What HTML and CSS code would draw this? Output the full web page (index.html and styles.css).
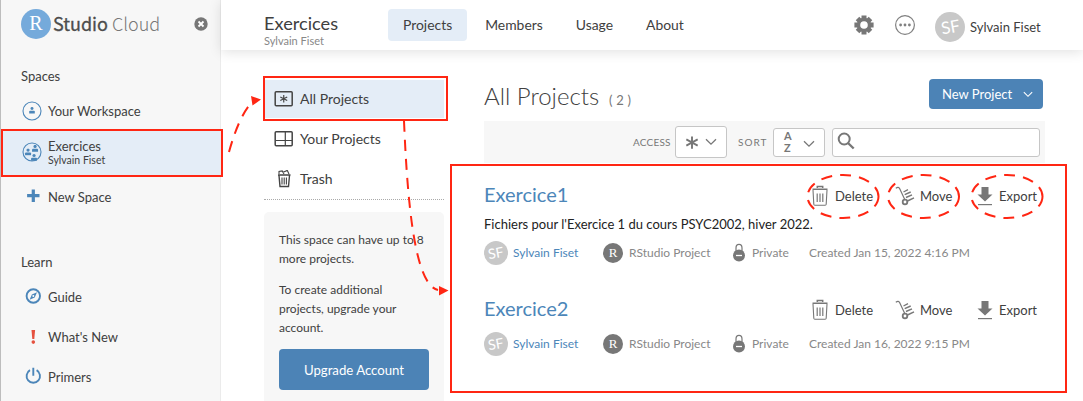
FILE: index.html
```html
<!DOCTYPE html>
<html lang="en">
<head>
<meta charset="utf-8">
<title>RStudio Cloud</title>
<link rel="stylesheet" href="styles.css">
</head>
<body>
<svg class="defs" aria-hidden="true">
  <symbol id="trash" viewBox="0 0 18 22">
    <path d="M1.500 4.200h15M6.300 3V1.600h5.400V3" fill="none" stroke="currentColor" stroke-width="1.500"/>
    <path d="M2 5l.8 14.300q.1 1 1.100 1h10.200q1 0 1.100-1L16 5" fill="none" stroke="currentColor" stroke-width="1.100"/>
    <path d="M6.200 8.500v8.500M9 8.500v8.500M11.800 8.500v8.500" stroke="currentColor" stroke-width="1.200"/>
  </symbol>
  <symbol id="truck" viewBox="0 0 20 20">
    <path d="M.8 2.200q2.800-1.800 3.800.4L10 14" fill="none" stroke="currentColor" stroke-width="1.200"/>
    <path d="M8.500 6l4.500-2.300M9.700 8.700l6-2.700M11 11.500l6-2.700M12.500 15l6.500-3.200" stroke="currentColor" stroke-width="1.400"/>
    <circle cx="10" cy="16" r="2.300" fill="none" stroke="currentColor" stroke-width="1.800"/>
  </symbol>
  <symbol id="export" viewBox="0 0 16 20">
    <path d="M4.500 1h7v7.500h4L8 15.500l-7.500-7h4z" fill="currentColor"/>
    <path d="M1 18.600h14" stroke="currentColor" stroke-width="1.200"/>
  </symbol>
  <symbol id="lock" viewBox="0 0 14 20">
    <path d="M4 10V5a3 3.600 0 0 1 6 0v5" fill="none" stroke="currentColor" stroke-width="1.200"/>
    <circle cx="7" cy="12.500" r="6" fill="currentColor"/>
    <path d="M4 12.500h6" stroke="#fff" stroke-width="1.300"/>
  </symbol>
  <symbol id="person" viewBox="0 0 8 8">
    <circle cx="4" cy="2" r="1.700"/><path d="M.8 7.600V5.500q0-1 1-1h4.400q1 0 1 1v2.100z"/>
  </symbol>
  <symbol id="star" viewBox="0 0 16 16">
    <path d="M8 1v14M1.500 4.500l13 7M14.500 4.500l-13 7" stroke="currentColor" stroke-width="2.200"/>
  </symbol>
  <symbol id="chev" viewBox="0 0 12 8">
    <path d="M1 1.200l5 5 5-5" fill="none" stroke="currentColor" stroke-width="1.300"/>
  </symbol>
</svg>

<div class="app">
  <aside class="sidebar">
    <div class="brand">
      <span class="brand-mark">R</span>
      <span class="brand-name">Studio</span>
      <span class="brand-sub">Cloud</span>
      <svg class="close" viewBox="0 0 14 14"><circle cx="7" cy="7" r="6.700" fill="#777"/><path d="M4.500 4.500l5 5M9.500 4.500l-5 5" stroke="#fff" stroke-width="1.800"/></svg>
    </div>
    <h2 class="group">Spaces</h2>
    <a class="nav workspace"><svg class="nav-icon ring" viewBox="0 0 20 20"><circle cx="10" cy="10" r="9" fill="none" stroke="#4c86b9" stroke-width="1.100"/><use href="#person" x="6.500" y="5.500" width="7" height="7.500" fill="#4c86b9"/></svg><span>Your Workspace</span></a>
    <a class="nav current"><svg class="nav-icon ring" viewBox="0 0 20 20"><circle cx="10" cy="10" r="9" fill="none" stroke="#4c86b9" stroke-width="1.100"/><g fill="#4c86b9"><use href="#person" x="9.300" y="2.500" width="7.500" height="7.500"/><use href="#person" x="2.300" y="6.200" width="7.500" height="7.500"/><use href="#person" x="8.300" y="11.600" width="7.500" height="7.500"/></g></svg><span class="stack"><span>Exercices</span><small>Sylvain Fiset</small></span></a>
    <a class="nav new"><svg class="nav-icon" viewBox="0 0 20 20"><path d="M10.300 2.500v12.400M4.100 8.700h12.400" stroke="#4c86b9" stroke-width="3.200"/></svg><span>New Space</span></a>
    <h2 class="group learn">Learn</h2>
    <a class="nav"><svg class="nav-icon" viewBox="0 0 20 20"><circle cx="10.300" cy="9" r="6.700" fill="none" stroke="#4c86b9" stroke-width="1.900"/><path d="M14 5.300l-2.300 5.200-5.100 2.200 2.300-5.200z" fill="#4c86b9"/><circle cx="10.300" cy="9" r="1" fill="#fff"/></svg><span>Guide</span></a>
    <a class="nav"><svg class="nav-icon" viewBox="0 0 20 20"><path d="M8.500 3h3.600l-.8 9H9.300z" fill="#e5513f"/><circle cx="10.300" cy="15.100" r="1.800" fill="#e5513f"/></svg><span>What's New</span></a>
    <a class="nav"><svg class="nav-icon" viewBox="0 0 20 20"><path d="M7 3.200a6.700 6.700 0 1 0 6.600 0M10.300 .8v8" fill="none" stroke="#4c86b9" stroke-width="1.900"/></svg><span>Primers</span></a>
  </aside>

  <div class="page">
    <header class="topbar">
      <div class="space-name"><h1>Exercices</h1><span>Sylvain Fiset</span></div>
      <nav class="tabs"><a class="active">Projects</a><a>Members</a><a>Usage</a><a>About</a></nav>
      <div class="user">
        <svg class="gear" viewBox="0 0 20 20"><g stroke="#777" stroke-width="5"><path d="M10 .4v19.200M.4 10h19.200M3.500 3.500l13 13M16.500 3.500l-13 13"/></g><circle cx="10" cy="10" r="7.200" fill="#777"/><circle cx="10" cy="10" r="3.800" fill="#fff"/></svg>
        <svg class="more" viewBox="0 0 20 20"><circle cx="10" cy="10" r="9.400" fill="none" stroke="#808080" stroke-width="1.200"/><g fill="#808080"><circle cx="5.600" cy="10" r="1.400"/><circle cx="10" cy="10" r="1.400"/><circle cx="14.400" cy="10" r="1.400"/></g></svg>
        <span class="avatar big"><i>SF</i></span>
        <span class="user-name">Sylvain Fiset</span>
      </div>
    </header>

    <div class="body">
      <section class="filters">
        <a class="filter on"><svg viewBox="0 0 20 18"><rect x="1.200" y="1.700" width="17" height="14" rx="1" fill="none" stroke="#444" stroke-width="1.500"/><use href="#star" x="5.500" y="4.500" width="8.500" height="8.500" color="#444"/></svg><span>All Projects</span></a>
        <a class="filter"><svg viewBox="0 0 20 18"><rect x="1.200" y="1.700" width="17" height="14" rx="1" fill="none" stroke="#444" stroke-width="1.500"/><path d="M11.300 2v13.500M2 10.500h16" stroke="#444" stroke-width="1.200"/></svg><span>Your Projects</span></a>
        <a class="filter"><svg viewBox="0 0 20 18"><path d="M4 5h12.500M5 5.500l1 11h8.500l1-11" fill="none" stroke="#444" stroke-width="1.400"/><path d="M8 7.500v7M10.200 7.500v7M12.400 7.500v7M5 4V1.500l3.200-.6 1.800 3M8.500 2.400l4.800-2 1.700 3.600" fill="none" stroke="#444" stroke-width="1.100"/></svg><span>Trash</span></a>
        <div class="upgrade">
          <p>This space can have up to 8 more projects.</p>
          <p>To create additional projects, upgrade your account.</p>
          <button class="primary">Upgrade Account</button>
        </div>
      </section>

      <main class="content">
        <div class="heading">
          <h2>All Projects</h2><span class="count">( 2 )</span>
          <button class="primary create"><span>New Project</span><svg viewBox="0 0 12 8"><use href="#chev"/></svg></button>
        </div>
        <div class="toolbar">
          <span class="label access">ACCESS</span>
          <span class="select tall"><svg class="glyph" viewBox="0 0 16 16"><use href="#star"/></svg><svg class="arrow" viewBox="0 0 12 8"><use href="#chev"/></svg></span>
          <span class="label sort">SORT</span>
          <span class="select"><span class="az"><b>A</b><b>Z</b></span><svg class="arrow low" viewBox="0 0 12 8"><use href="#chev"/></svg></span>
          <span class="search"><svg viewBox="0 0 18 18"><circle cx="7.200" cy="7" r="5.500" fill="none" stroke="#777" stroke-width="2"/><path d="M11 11l5.700 5.500" stroke="#777" stroke-width="2.400"/></svg></span>
        </div>

        <article class="project">
          <div class="project-head"><h3>Exercice1</h3>
            <div class="actions"><a><svg class="i-trash"><use href="#trash"/></svg>Delete</a><a><svg class="i-truck"><use href="#truck"/></svg>Move</a><a><svg class="i-export"><use href="#export"/></svg>Export</a></div>
          </div>
          <p class="description">Fichiers pour l'Exercice 1 du cours PSYC2002, hiver 2022.</p>
          <div class="meta"><span class="avatar"><i>SF</i></span><a class="owner">Sylvain Fiset</a><span class="kind-mark">R</span><span class="kind">RStudio Project</span><svg class="i-lock"><use href="#lock"/></svg><span class="privacy">Private</span><span class="created">Created Jan 15, 2022 4:16 PM</span></div>
        </article>
        <article class="project second">
          <div class="project-head"><h3>Exercice2</h3>
            <div class="actions"><a><svg class="i-trash"><use href="#trash"/></svg>Delete</a><a><svg class="i-truck"><use href="#truck"/></svg>Move</a><a><svg class="i-export"><use href="#export"/></svg>Export</a></div>
          </div>
          <div class="meta"><span class="avatar"><i>SF</i></span><a class="owner">Sylvain Fiset</a><span class="kind-mark">R</span><span class="kind">RStudio Project</span><svg class="i-lock"><use href="#lock"/></svg><span class="privacy">Private</span><span class="created">Created Jan 16, 2022 9:15 PM</span></div>
        </article>
      </main>
    </div>
  </div>
</div>

<!-- Annotation layer: highlight boxes, arrows and ellipses -->
<svg class="notes" viewBox="0 0 1083 401" fill="none" stroke="#ff2613" stroke-width="2">
  <rect x="2" y="130" width="220" height="46"/>
  <rect x="264" y="77" width="183" height="43"/>
  <rect x="451" y="165" width="615" height="227"/>
  <g stroke-dasharray="11 8">
    <path d="M229 152Q239 116 252 102"/>
    <path d="M404 121C407 190 413 285 438 290"/>
    <ellipse cx="843" cy="196.500" rx="35.500" ry="21.500"/>
    <ellipse cx="923.500" cy="196.500" rx="35.500" ry="21.500"/>
    <ellipse cx="1007" cy="196.500" rx="35.500" ry="21.500"/>
  </g>
  <path d="M251 96l10 3.500-8.500 6zM439 286l9.500 4.500-9.500 5z" fill="#ff2613" stroke="none"/>
</svg>
</body>
</html>
```

FILE: styles.css
```css
* { box-sizing: border-box; }
body { margin: 0; width: 1083px; height: 401px; overflow: hidden; position: relative; background: #fff; color: #404040; font: 13px/16px Lato, sans-serif; }
h1, h2, h3, p { margin: 0; font-weight: 400; }
svg { display: block; flex: none; }
span, a, h1, h2, h3 { white-space: nowrap; }
.defs { position: absolute; width: 0; height: 0; }
.notes { position: absolute; left: 0; top: 0; width: 1083px; height: 401px; pointer-events: none; }
.app { display: flex; height: 401px; }

.sidebar { width: 221px; flex: none; background: #f7f7f7; border-left: 1px solid #bdbdbd; border-right: 1px solid #ebebeb; }
.brand { display: flex; align-items: center; height: 48px; padding-left: 20px; font: 18.500px/30px "Noto Sans CJK SC", sans-serif; }
.brand-mark { flex: none; width: 30px; height: 30px; border-radius: 50%; background: #75aadb; color: #fff; text-align: center; font: 20px/29px "Liberation Serif", serif; }
.brand-name { flex: none; width: 60px; padding: 0 0 2px 2px; color: #4d4d4d; font-weight: 400; font-size: 18px; -webkit-text-stroke: .3px #4d4d4d; }
.brand-sub { flex: none; width: 82px; padding: 0 0 2px 1px; color: #777; font-weight: 300; font-size: 18px; }
.close { width: 14px; height: 14px; margin-left: 1px; }
.group { font-size: 13px; line-height: 16px; margin: 20px 0 15px 20px; }
.nav { display: flex; align-items: center; height: 40px; padding-left: 22px; }
.nav span { margin-left: 5px; }
.nav-icon { width: 20px; height: 20px; }
.ring { margin-right: 2px; margin-left: -1px; }
.nav .ring + span { margin-left: 4px; }
.workspace { height: 30px; margin-top: -3px; }
.current { height: 46px; margin-top: 3px; background: #e4edf7; }
.stack { display: flex; flex-direction: column; }
.nav .stack span { margin: 0; line-height: 16px; }
.stack small { font-size: 10.500px; line-height: 12px; }
.new { height: 42px; padding-top: 1px; }
.learn { margin: 37px 0 7px 20px; }

.page { flex: 1; min-width: 0; }
.topbar { display: flex; height: 50px; background: #fff; padding-left: 43px; box-shadow: 0 2px 12px rgba(0,0,0,.12); }
.space-name { width: 124px; padding-top: 11px; }
.space-name h1 { font-size: 18.200px; line-height: 24px; }
.space-name span { display: block; font-size: 11px; line-height: 11px; color: #888; }
.tabs { display: flex; gap: 3px; height: 32px; margin-top: 9px; }
.tabs a { padding: 0 15px; line-height: 32px; border-radius: 4px; font-size: 13.900px; }
.tabs .active { background: #e4edf7; }
.user { display: flex; align-items: center; margin-left: auto; padding-right: 42px; }
.gear { width: 20px; height: 20px; margin-right: 21px; }
.more { width: 20px; height: 20px; margin-right: 20px; }
.avatar { width: 24px; height: 24px; border-radius: 50%; background: #c8c8c8; color: #fff; display: flex; align-items: center; justify-content: center; font-size: 14px; flex: none; }
.avatar i { font-style: normal; transform: rotate(-10deg); }
.avatar.big { width: 30px; height: 30px; font-size: 17px; margin-top: 4px; }
.user-name { width: 71px; margin: 4px 0 0 5px; }

.body { display: flex; padding: 29px 0 0 43px; }
.filters { width: 180px; flex: none; margin-right: 40px; }
.filter { display: flex; align-items: center; gap: 6px; height: 40px; padding-left: 10px; font-size: 14px; }
.filter svg { width: 20px; height: 18px; }
.filter.on { background: #e4edf7; height: 38px; margin: 1px 0; }
.filter:nth-child(3) { border-bottom: 1px dotted #aaa; height: 41px; }
.upgrade { margin-top: 12px; padding: 18px 15px; height: 200px; background: #f7f7f7; border-radius: 5px; font-size: 12px; line-height: 19px; }
.upgrade p { margin-bottom: 12px; }
.primary { border: 0; border-radius: 4px; background: #4c83b6; color: #fff; font: 13px/16px Lato, sans-serif; }
.upgrade .primary { display: block; width: 150px; height: 41px; font-size: 13.200px; }

.content { width: 561px; flex: none; }
.heading { display: flex; height: 42px; }
.heading h2 { width: 125px; font-size: 24px; line-height: 34px; font-weight: 300; }
.count { font-size: 13px; line-height: 42px; letter-spacing: .2px; color: #777; }
.create { width: 114px; height: 30px; margin: 0 2px 0 auto; padding: 0 10px 0 13px; display: flex; align-items: center; justify-content: space-between; }
.create svg { width: 10px; height: 7px; }
.toolbar { display: flex; align-items: center; height: 42px; background: #f7f7f7; padding-left: 149px; color: #777; }
.label { font-size: 10px; letter-spacing: .2px; }
.access { width: 42px; }
.sort { width: 35px; margin-left: 11px; letter-spacing: 1px; }
.select { display: flex; align-items: center; justify-content: space-between; width: 52px; height: 29px; border: 1px solid #c6c6c6; border-radius: 3px; background: #fff; padding: 0 9px 0 10px; }
.select.tall { height: 32px; padding-left: 9px; }
.glyph { width: 14px; height: 15px; }
.arrow { width: 12px; height: 8px; }
.low { margin-top: 3px; }
.az b { display: block; font-size: 11px; line-height: 12px; font-weight: 700; }
.search { display: flex; align-items: center; width: 208px; height: 29px; margin-left: 7px; padding: 0 0 2px 4px; border: 1px solid #c6c6c6; border-radius: 3px; background: #fff; }
.search svg { width: 18px; height: 18px; }

.project { padding-top: 20px; }
.project-head { display: flex; height: 24px; align-items: center; }
.project h3 { width: 327px; font-size: 20px; line-height: 24px; color: #4c86b9; padding-bottom: 2px; }
.actions { display: grid; grid-template-columns: 85px 80px 60px; align-items: center; padding-top: 2px; }
.actions a { display: flex; align-items: center; }
.actions svg { color: #777; }
.i-trash { width: 18px; height: 22px; margin-right: 6px; }
.i-truck { width: 20px; height: 20px; margin: 0 5px 0 -1px; }
.i-export { width: 16px; height: 20px; margin: 0 6px 0 1px; }
.description { line-height: 16px; margin: 9px 0; color: #222; }
.meta { display: grid; grid-template-columns: 29px 90px 26px 103px 20px 57px 180px; align-items: center; height: 24px; font-size: 12px; color: #888; }
.owner { color: #4c86b9; }
.kind-mark { width: 20px; height: 20px; border-radius: 50%; background: #777; color: #fff; text-align: center; font: 13px/20px "Liberation Serif", serif; }
.i-lock { width: 14px; height: 20px; color: #777; }
.second { padding-top: 32px; }
.second .meta { margin-top: 11px; }
```
